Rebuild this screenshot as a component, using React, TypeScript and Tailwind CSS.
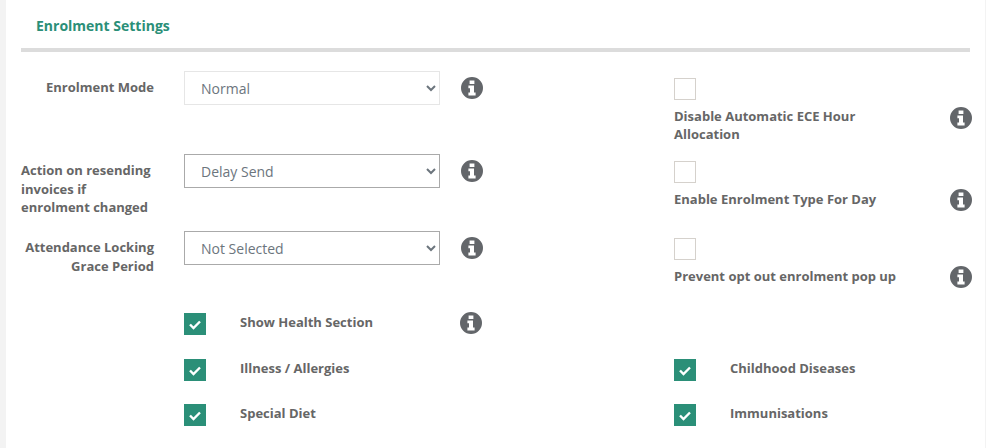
function Info() {
  return (
    <svg width="22" height="22" viewBox="0 0 22 22" className="shrink-0 block">
      <path
        fill="#63666a"
        fillRule="evenodd"
        d="M11 0a11 11 0 1 1 0 22a11 11 0 0 1 0-22ZM8.6 3.6v3.4h4.8V3.6ZM7.4 8.6v2.6h1.6v4.2H7.4v3h7.2v-3H13V8.6Z"
      />
    </svg>
  );
}

function Check() {
  return (
    <span className="w-[22px] h-[22px] bg-[#2b8f78] flex items-center justify-center shrink-0">
      <svg width="14" height="11" viewBox="0 0 14 11" fill="none" stroke="#fff" strokeWidth="2.4">
        <path d="M2 5.5 L5.5 9 L12 2.5" />
      </svg>
    </span>
  );
}

function Box() {
  return <span className="block w-[22px] h-[22px] border border-[#d5d1cc] bg-white" />;
}

function Field({ label, value, light, height }: { label: React.ReactNode; value: string; light?: boolean; height: string }) {
  return (
    <div className={`flex items-start w-[653px] shrink-0 ${height}`}>
      <div className="w-[133px] pt-[7px] text-right text-[13px] leading-[18.5px] font-bold text-[#666]">{label}</div>
      <select
        defaultValue={value}
        className={`ml-[30px] w-[256px] h-[34px] pl-[12px] bg-white text-[14px] text-[#6c757d] border ${light ? "border-[#e6e6e6]" : "border-[#aaa]"}`}
      >
        <option>{value}</option>
      </select>
      <div className="ml-[21px] pt-[6px]">
        <Info />
      </div>
    </div>
  );
}

function RightField({ label, iconTop }: { label: React.ReactNode; iconTop: string }) {
  return (
    <div className="w-[298px] shrink-0 pt-[7px] flex items-start justify-between">
      <div>
        <Box />
        <div className="mt-[7px] w-[230px] text-[13px] leading-[18px] font-bold text-[#666]">{label}</div>
      </div>
      <div className={iconTop}>
        <Info />
      </div>
    </div>
  );
}

function CheckRow({ label, info }: { label: string; info?: boolean }) {
  return (
    <div className="flex items-center w-[298px] shrink-0">
      <Check />
      <span className="ml-[34px] -mt-[2px] text-[13px] font-bold text-[#666]">{label}</span>
      {info && (
        <span className="ml-auto -mt-[2px]">
          <Info />
        </span>
      )}
    </div>
  );
}

export default function App() {
  return (
    <div className="h-[448px] bg-[#f3f3f3] pl-[6px] pr-[1px] overflow-hidden font-['Open_Sans',sans-serif]">
      <div className="h-full bg-white px-[15px]">
        <h2 className="h-[48px] pl-[15px] pt-[15px] text-[14px] leading-[22px] font-bold text-[#2b8f78]">Enrolment Settings</h2>
        <div className="h-[4px] w-[949px] bg-[#dcdcdc]" />
        <div className="mt-[19px] flex">
          <Field label="Enrolment Mode" value="Normal" light height="h-[83px]" />
          <RightField label="Disable Automatic ECE Hour Allocation" iconTop="pt-[29px]" />
        </div>
        <div className="flex">
          <Field label={<span className="block text-left">Action on resending invoices if<br />enrolment changed</span>} value="Delay Send" height="h-[77px]" />
          <RightField label="Enable Enrolment Type For Day" iconTop="pt-[28px]" />
        </div>
        <div className="flex">
          <Field label={<>Attendance Locking<br />Grace Period</>} value="Not Selected" height="h-[82px]" />
          <RightField label="Prevent opt out enrolment pop up" iconTop="pt-[28px]" />
        </div>
        <div className="pl-[163px]">
          <CheckRow label="Show Health Section" info />
        </div>
        <div className="mt-[24px] flex pl-[163px]">
          <div className="w-[490px] shrink-0"><CheckRow label="Illness / Allergies" /></div>
          <CheckRow label="Childhood Diseases" />
        </div>
        <div className="mt-[23px] flex pl-[163px]">
          <div className="w-[490px] shrink-0"><CheckRow label="Special Diet" /></div>
          <CheckRow label="Immunisations" />
        </div>
      </div>
    </div>
  );
}
